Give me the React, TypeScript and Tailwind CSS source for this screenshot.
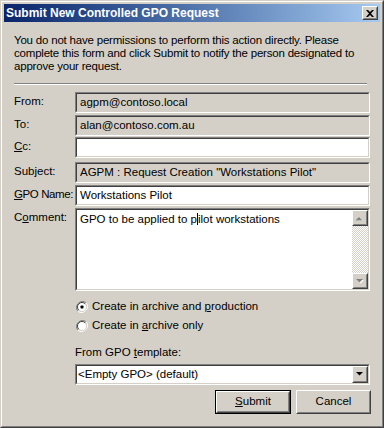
import type { ReactNode } from "react";

function Sunken({ className, bg, children }: { className: string; bg: string; children?: ReactNode }) {
  return (
    <div className={`border border-t-[#808080] border-l-[#808080] border-b-white border-r-white ${className}`}>
      <div className={`flex h-full w-full border border-t-[#404040] border-l-[#404040] border-b-[#d4d0c8] border-r-[#d4d0c8] ${bg}`}>
        {children}
      </div>
    </div>
  );
}

function Raised({ className, children }: { className: string; children?: ReactNode }) {
  return (
    <div className={`border border-t-white border-l-white border-b-[#404040] border-r-[#404040] bg-[#d4d0c8] ${className}`}>
      <div className="flex h-full w-full items-center justify-center border border-t-[#d4d0c8] border-l-[#d4d0c8] border-b-[#808080] border-r-[#808080]">
        {children}
      </div>
    </div>
  );
}

function Arrow({ up, disabled }: { up?: boolean; disabled?: boolean }) {
  return (
    <svg width="8" height="5" viewBox="0 0 8 5" className="block">
      {disabled && <polygon points={up ? "4,2 7.5,5.5 0.5,5.5" : "1,1 8,1 4.5,4.5"} fill="#ffffff" />}
      <polygon points={up ? "3,1 6.5,4.5 -0.5,4.5" : "0,0 7,0 3.5,3.5"} fill={disabled ? "#808080" : "#000000"} />
    </svg>
  );
}

function Radio({ checked }: { checked?: boolean }) {
  return (
    <svg width="12" height="12" viewBox="0 0 12 12" className="block shrink-0">
      <path d="M10.2 1.8 A6 6 0 0 0 1.8 10.2" fill="none" stroke="#808080" strokeWidth="1" />
      <path d="M1.8 10.2 A6 6 0 0 0 10.2 1.8" fill="none" stroke="#ffffff" strokeWidth="1" />
      <circle cx="6" cy="6" r="4.5" fill="#ffffff" />
      <path d="M9.2 2.8 A4.5 4.5 0 0 0 2.8 9.2" fill="none" stroke="#404040" strokeWidth="1" />
      <path d="M2.8 9.2 A4.5 4.5 0 0 0 9.2 2.8" fill="none" stroke="#d4d0c8" strokeWidth="1" />
      {checked && <rect x="4.5" y="4.5" width="3" height="3" rx="0.8" fill="#000000" />}
    </svg>
  );
}

function Row({ label, mt, children }: { label: ReactNode; mt: string; children: ReactNode }) {
  return (
    <div className={`flex ${mt}`}>
      <div className="w-[61px] shrink-0 whitespace-nowrap pt-[3px] leading-[13px]">{label}</div>
      {children}
    </div>
  );
}

function Field({ value, disabled, mt, label }: { value: string; disabled?: boolean; mt: string; label: ReactNode }) {
  return (
    <Row label={label} mt={mt}>
      <Sunken className="h-[21px] w-[295px]" bg={disabled ? "bg-[#d4d0c8]" : "bg-white"}>
        <span className="flex items-center whitespace-nowrap pl-[3px] leading-[13px]">{value}</span>
      </Sunken>
    </Row>
  );
}

export default function App() {
  return (
    <div className="h-[428px] w-[384px] border border-t-[#d4d0c8] border-l-[#d4d0c8] border-b-[#404040] border-r-[#404040] bg-[#d4d0c8] font-['Liberation_Sans',Arial,sans-serif] text-[11.5px] text-black">
      <div className="flex h-full w-full flex-col border border-t-white border-l-white border-b-[#808080] border-r-[#808080] p-[2px]">
        {/* Title bar */}
        <div className="flex h-[18px] shrink-0 items-center justify-between bg-gradient-to-r from-[#0a246a] to-[#a6caf0] pl-[2px] pr-[2px]">
          <span className="text-[12px] font-bold leading-none text-white">Submit New Controlled GPO Request</span>
          <Raised className="h-[14px] w-[16px]">
            <svg width="8" height="7" viewBox="0 0 8 7" className="block">
              <path d="M0 0h2l2 2 2-2h2L5 3.5 8 7H6L4 5 2 7H0l3-3.5z" fill="#000" />
            </svg>
          </Raised>
        </div>

        <div className="flex flex-col pl-[10px]">
          <p className="mt-[12px] whitespace-nowrap leading-[13px] tracking-[-0.2px]">
            You do not have permissions to perform this action directly. Please
            <br />
            complete this form and click Submit to notify the person designated to
            <br />
            approve your request.
          </p>

          <div className="mt-[10px] w-[353px] border-t border-b border-t-[#808080] border-b-white" />

          <Field mt="mt-[7px]" label="From:" value="agpm@contoso.local" disabled />
          <Field mt="mt-[2px]" label="To:" value="alan@contoso.com.au" disabled />
          <Field mt="mt-[1px]" label={<><u>C</u>c:</>} value="" />
          <Field mt="mt-[4px]" label="Subject:" value={'AGPM : Request Creation "Workstations Pilot"'} disabled />
          <Field
            mt="mt-[2px]"
            label={<span className="tracking-[-0.4px]"><u>G</u>PO Name:</span>}
            value="Workstations Pilot"
          />

          <Row mt="mt-[2px]" label={<>C<u>o</u>mment:</>}>
            <Sunken className="h-[83px] w-[295px]" bg="bg-white">
              <div className="flex-1 pl-[3px] pt-[3px] leading-[13px]">
                GPO to be applied to p<span className="border-l border-black">i</span>lot workstations
              </div>
              <div className="flex w-[16px] flex-col">
                <Raised className="h-[16px] w-[16px]">
                  <Arrow up disabled />
                </Raised>
                <div className="flex-1 bg-[image:repeating-conic-gradient(#d4d0c8_0%_25%,#ffffff_0%_50%)] bg-[length:2px_2px]" />
                <Raised className="h-[16px] w-[16px]">
                  <Arrow disabled />
                </Raised>
              </div>
            </Sunken>
          </Row>

          <div className="ml-[62px] mt-[9px] flex flex-col gap-[6px]">
            <label className="flex h-[13px] items-center gap-[4px] leading-[13px]">
              <Radio checked />
              <span>Create in archive and <u>p</u>roduction</span>
            </label>
            <label className="flex h-[13px] items-center gap-[4px] leading-[13px]">
              <Radio />
              <span>Create in <u>a</u>rchive only</span>
            </label>
          </div>

          <div className="ml-[61px] mt-[14px] leading-[13px]">
            From GPO <u>t</u>emplate:
          </div>

          <Sunken className="ml-[61px] mt-[5px] h-[21px] w-[295px]" bg="bg-white">
            <span className="flex flex-1 items-center pl-[1px] leading-[13px]">&lt;Empty GPO&gt; (default)</span>
            <Raised className="h-[17px] w-[16px]">
              <Arrow />
            </Raised>
          </Sunken>

          <div className="ml-[201px] mt-[5px] flex gap-[5px]">
            <div className="border border-black">
              <Raised className="h-[22px] w-[74px]">
                <span><u>S</u>ubmit</span>
              </Raised>
            </div>
            <Raised className="h-[24px] w-[75px]">
              <span>Cancel</span>
            </Raised>
          </div>
        </div>
      </div>
    </div>
  );
}
